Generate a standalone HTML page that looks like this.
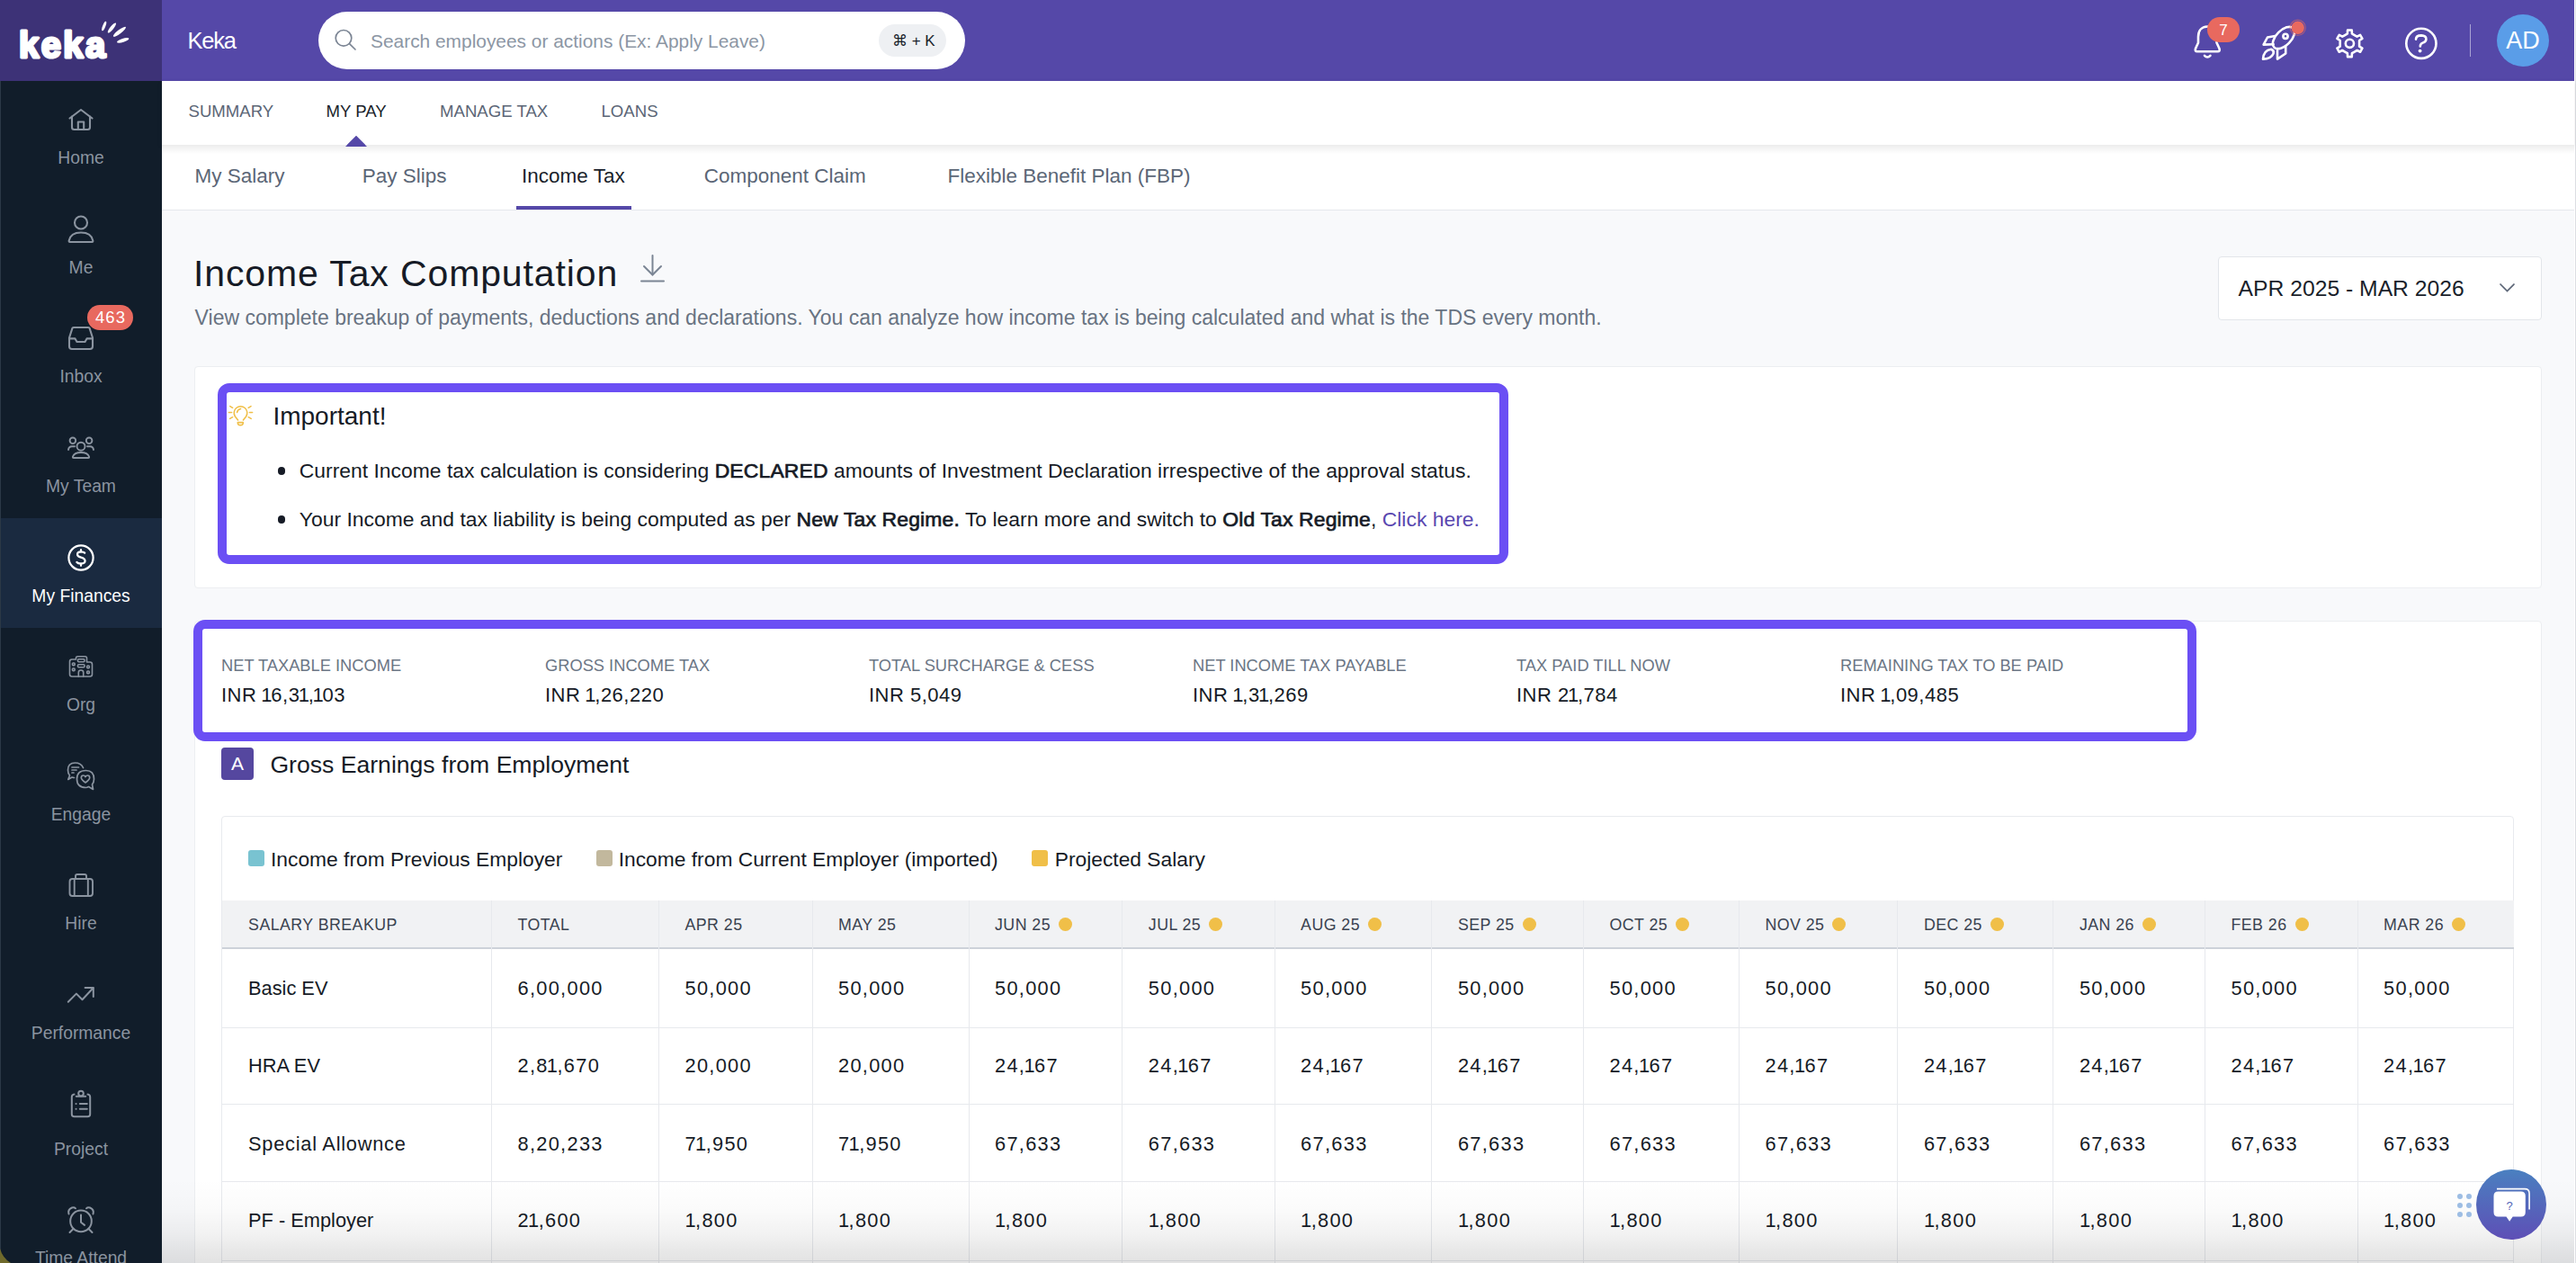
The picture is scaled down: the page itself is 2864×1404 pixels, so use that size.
<!DOCTYPE html>
<html><head><meta charset="utf-8"><style>
html,body{margin:0;padding:0;width:2864px;height:1404px;overflow:hidden;background:#f7f8fa}
body{position:relative;font-family:"Liberation Sans", sans-serif}
.a{position:absolute}
.t{position:absolute;line-height:1;white-space:nowrap;font-family:"Liberation Sans", sans-serif}
.sb{-webkit-text-stroke:0.7px #161b26;letter-spacing:0.17px}
.dot{display:inline-block;width:15px;height:15px;border-radius:50%;background:#f0bf48;margin-left:9px;vertical-align:-1px}
</style></head><body>
<div class="a" style="left:0.0px;top:0.0px;width:2864.0px;height:1404.0px;background:#f8f9fb"></div>
<div class="a" style="left:0.0px;top:0.0px;width:180.0px;height:1404.0px;background:#111d2a"></div>
<div class="a" style="left:0.0px;top:0.0px;width:180.0px;height:90.0px;background:#3d3277"></div>
<svg class="a" style="left:0;top:0" width="180" height="90" viewBox="0 0 180 90"><text x="21" y="64" font-family="Liberation Sans" font-weight="700" font-size="40" letter-spacing="2.4" fill="#fff" stroke="#fff" stroke-width="3" stroke-linejoin="round">keka</text><g fill="#fff"><ellipse cx="115.7" cy="29" rx="5.6" ry="1.6" transform="rotate(-69 115.7 29)"/><ellipse cx="124.4" cy="31" rx="7" ry="1.9" transform="rotate(-51 124.4 31)"/><ellipse cx="132.9" cy="35.3" rx="8.7" ry="2.1" transform="rotate(-37 132.9 35.3)"/><ellipse cx="136.7" cy="44.9" rx="7" ry="2.0" transform="rotate(-18 136.7 44.9)"/></g></svg>
<div class="a" style="left:0.0px;top:575.5px;width:180.0px;height:122.5px;background:#1a2a40"></div>
<div class="t" style="left:0;width:180px;text-align:center;top:166.3px;font-size:19.3px;color:#8b94a0">Home</div>
<div class="t" style="left:0;width:180px;text-align:center;top:287.9px;font-size:19.3px;color:#8b94a0">Me</div>
<div class="t" style="left:0;width:180px;text-align:center;top:408.7px;font-size:19.3px;color:#8b94a0">Inbox</div>
<div class="t" style="left:0;width:180px;text-align:center;top:531.2px;font-size:19.3px;color:#8b94a0">My Team</div>
<div class="t" style="left:0;width:180px;text-align:center;top:653.0px;font-size:19.3px;color:#ffffff">My Finances</div>
<div class="t" style="left:0;width:180px;text-align:center;top:773.9px;font-size:19.3px;color:#8b94a0">Org</div>
<div class="t" style="left:0;width:180px;text-align:center;top:895.7px;font-size:19.3px;color:#8b94a0">Engage</div>
<div class="t" style="left:0;width:180px;text-align:center;top:1016.6px;font-size:19.3px;color:#8b94a0">Hire</div>
<div class="t" style="left:0;width:180px;text-align:center;top:1139.3px;font-size:19.3px;color:#8b94a0">Performance</div>
<div class="t" style="left:0;width:180px;text-align:center;top:1268.2px;font-size:19.3px;color:#8b94a0">Project</div>
<div class="t" style="left:0;width:180px;text-align:center;top:1389.0px;font-size:19.3px;color:#8b94a0">Time Attend</div>
<div class="a" style="left:0.0px;top:90.0px;width:1.2px;height:1314.0px;background:#2b3846"></div>
<svg class="a" style="left:0;top:0" width="180" height="1404" viewBox="0 0 180 1404" fill="none"><g stroke="#8b94a0" stroke-width="2.1" stroke-linecap="round" stroke-linejoin="round"><path d="M77.5 131.5 L90 122 L102.5 131.5"/><path d="M80 129.5 V141.5 Q80 144 82.5 144 H97.5 Q100 144 100 141.5 V129.5"/><path d="M86.8 144 V135.5 H93.2 V144"/></g></svg>
<svg class="a" style="left:0;top:0" width="180" height="1404" viewBox="0 0 180 1404" fill="none"><g stroke="#8b94a0" stroke-width="2.1" stroke-linecap="round" stroke-linejoin="round"><circle cx="90" cy="247.5" r="7"/><path d="M77.5 269 H102.5 Q103.5 269 103.3 267.5 Q101.5 258.5 90 258.5 Q78.5 258.5 76.7 267.5 Q76.5 269 77.5 269 Z"/></g></svg>
<svg class="a" style="left:0;top:0" width="180" height="1404" viewBox="0 0 180 1404" fill="none"><g stroke="#8b94a0" stroke-width="2.1" stroke-linecap="round" stroke-linejoin="round"><path d="M77 375.5 L80.5 364.6 Q81 364 82 364 H98 Q99 364 99.5 364.6 L103 375.5 V385 Q103 388 100 388 H80 Q77 388 77 385 Z"/><path d="M77 376.4 H83.5 L85.5 380 H94.5 L96.5 376.4 H103"/></g></svg>
<div class="a" style="left:97px;top:339px;width:51px;height:28px;border-radius:14px;background:#e8695f"></div>
<div class="t" style="left:97px;width:51px;text-align:center;top:344.3px;font-size:18.5px;letter-spacing:1px;text-indent:1px;color:#fff">463</div>
<svg class="a" style="left:0;top:0" width="180" height="1404" viewBox="0 0 180 1404" fill="none"><g stroke="#8b94a0" stroke-width="1.9" stroke-linecap="round" stroke-linejoin="round"><circle cx="80.9" cy="489.8" r="3.3"/><circle cx="99.1" cy="489.8" r="3.3"/><circle cx="90" cy="496.2" r="4.5"/><path d="M82 509 H98 Q99.5 509 99 507.5 Q97.5 503 90 503 Q82.5 503 81 507.5 Q80.5 509 82 509 Z"/><path d="M76 500 Q76.5 496.3 80 496.3 H83"/><path d="M104 500 Q103.5 496.3 100 496.3 H97"/></g></svg>
<svg class="a" style="left:0;top:0" width="180" height="1404" viewBox="0 0 180 1404" fill="none"><g stroke="#ffffff" stroke-width="2.2" stroke-linecap="round" stroke-linejoin="round"><circle cx="90" cy="620" r="13.6"/><path d="M94.2 614.6 Q93 613.4 90 613.4 Q86 613.4 86 616.2 Q86 618.6 90 619.6 Q94.6 620.8 94.6 623.6 Q94.6 626.6 90 626.6 Q86.6 626.6 85.4 625"/><path d="M90 611.2 V613.4 M90 626.6 V628.8"/></g></svg>
<svg class="a" style="left:0;top:0" width="180" height="1404" viewBox="0 0 180 1404" fill="none"><g stroke="#8b94a0" stroke-width="1.6" stroke-linecap="round" stroke-linejoin="round"><path d="M77.5 745 V735.5 Q77.5 733 80 733 H84.5 V731.5 Q84.5 729.7 86.3 729.7 H94.7 Q96.5 729.7 96.5 731.5 V736 H100 Q102.5 736 102.5 738.5 V749.5 Q102.5 752 100 752 H80 Q77.5 752 77.5 749.5 Z"/><rect x="86.5" y="732.7" width="7.5" height="3" rx="1"/><rect x="86.5" y="738.8" width="7.5" height="3" rx="1"/><rect x="80.5" y="737" width="2.6" height="2.6" rx="0.8"/><rect x="80.5" y="743" width="2.6" height="2.6" rx="0.8"/><rect x="96.7" y="740" width="2.6" height="2.6" rx="0.8"/><rect x="96.7" y="746" width="2.6" height="2.6" rx="0.8"/><path d="M87.3 752 V747.5 Q87.3 745 90 745 Q92.7 745 92.7 747.5 V752"/></g></svg>
<svg class="a" style="left:0;top:0" width="180" height="1404" viewBox="0 0 180 1404" fill="none"><g stroke="#8b94a0" stroke-width="1.7" stroke-linecap="round" stroke-linejoin="round"><path d="M92.5 853.5 Q90 848 83.5 848 Q75.5 848 75.5 856 Q75.5 860 77.5 862 L75.8 866.5 L80 864 Q81.5 864.5 82.5 864.5"/><path d="M80 853 H87.5 M80 856 H85 M80 859 H82"/><path d="M95.5 856.5 Q104.5 856.5 104.5 866 Q104.5 869.5 102.5 872 L103.5 877.5 L98.5 874.5 Q97 875.5 95.5 875.5 Q85.5 875.5 85.5 866 Q85.5 856.5 95.5 856.5 Z"/><path d="M95 870 Q90.3 866.5 90.3 864.5 Q90.3 862 92.6 862 Q94.2 862 95 863.6 Q95.8 862 97.4 862 Q99.7 862 99.7 864.5 Q99.7 866.5 95 870 Z"/></g></svg>
<svg class="a" style="left:0;top:0" width="180" height="1404" viewBox="0 0 180 1404" fill="none"><g stroke="#8b94a0" stroke-width="1.9" stroke-linecap="round" stroke-linejoin="round"><rect x="77.5" y="977" width="25.5" height="19" rx="3"/><path d="M84 977 V973.8 Q84 972 86 972 H94 Q96 972 96 973.8 V977"/><path d="M82.7 977 V996 M97.8 977 V996"/></g></svg>
<svg class="a" style="left:0;top:0" width="180" height="1404" viewBox="0 0 180 1404" fill="none"><g stroke="#8b94a0" stroke-width="2.0" stroke-linecap="round" stroke-linejoin="round"><polyline points="75.8,1113.8 84.9,1104.6 91.5,1111.2 103.6,1098.2"/><polyline points="94.6,1098 103.8,1098 103.8,1108"/></g></svg>
<svg class="a" style="left:0;top:0" width="180" height="1404" viewBox="0 0 180 1404" fill="none"><g stroke="#8b94a0" stroke-width="2.0" stroke-linecap="round" stroke-linejoin="round"><path d="M82.5 1216.5 Q79.8 1216.8 79.8 1219.5 V1238.5 Q79.8 1241.3 82.6 1241.3 H97.4 Q100.2 1241.3 100.2 1238.5 V1219.5 Q100.2 1216.8 97.5 1216.5"/><circle cx="90" cy="1215.6" r="2.8"/><path d="M84.8 1218.8 H95.2"/><path d="M84.5 1227 H84.6 M84.5 1232.7 H84.6"/><path d="M88.8 1227 H96.8 M88.8 1232.7 H96.8"/></g></svg>
<svg class="a" style="left:0;top:0" width="180" height="1404" viewBox="0 0 180 1404" fill="none"><g stroke="#8b94a0" stroke-width="2.0" stroke-linecap="round" stroke-linejoin="round"><circle cx="90" cy="1357.4" r="11.8"/><path d="M90 1350.6 V1358.8 L94 1361.9"/><path d="M76.5 1349.5 Q75 1344.5 80 1342.5 Q82.5 1341.6 84 1343.3"/><path d="M103.5 1349.5 Q105 1344.5 100 1342.5 Q97.5 1341.6 96 1343.3"/><path d="M81.5 1366 L77.5 1370 M98.5 1366 L102.5 1370"/></g></svg>
<div class="a" style="left:180.0px;top:0.0px;width:2682.0px;height:90.0px;background:#5548a8"></div>
<div class="t" style="left:208.5px;top:33.4px;font-size:25.5px;color:#ffffff;font-weight:400;letter-spacing:-1.2px;">Keka</div>
<div class="a" style="left:353.5px;top:13.0px;width:719.0px;height:64.0px;background:#fff;border-radius:32px"></div>
<svg class="a" style="left:372.0px;top:32.0px;" width="25" height="25" viewBox="0 0 25 25" fill="none"><circle cx="10" cy="10.3" r="8.8" stroke="#7b8594" stroke-width="1.7"/><line x1="16.5" y1="16.6" x2="23" y2="23" stroke="#7b8594" stroke-width="1.7" stroke-linecap="round"/></svg>
<div class="t" style="left:412.0px;top:35.6px;font-size:20.9px;color:#8c96a4;font-weight:400;letter-spacing:0px;">Search employees or actions (Ex: Apply Leave)</div>
<div class="a" style="left:977.0px;top:27.0px;width:75.0px;height:36.0px;background:#eef0f3;border-radius:18px"></div>
<div class="t" style="left:992.0px;top:36.9px;font-size:17px;color:#1a1f2b;font-weight:400;letter-spacing:0px;">&#8984; + K</div>
<div class="a" style="left:2746.0px;top:27.0px;width:1.0px;height:36.0px;background:rgba(255,255,255,0.5)"></div>
<svg class="a" style="left:2420px;top:0" width="444" height="90" viewBox="2420 0 444 90" fill="none"><g stroke="#fff" stroke-width="2.6" stroke-linecap="round" stroke-linejoin="round"><path d="M2454.2 29.5 C2447.5 29.5 2444 34.5 2444 41 V47.5 L2441 54 Q2440 57.3 2443 57.3 H2465.5 Q2468.5 57.3 2467.5 54 L2464.5 47.5 V41 C2464.5 34.5 2461 29.5 2454.2 29.5 Z"/><path d="M2451 61.8 Q2454.2 65.2 2457.4 61.8"/><ellipse cx="2539" cy="42" rx="15" ry="8.3" transform="rotate(-45 2539 42)"/><circle cx="2541" cy="40.3" r="2.6"/><path d="M2529.5 40 L2521 41.5 L2516.6 49.6 L2527.6 49.3"/><path d="M2541.2 51.6 V59.5 L2532 65.6 L2532 56"/><path d="M2516 65.8 Q2516.5 56 2525 54.8 Q2528.5 56 2527.6 59.5 Q2525 65.5 2516 65.8 Z"/><path d="M2608.35 38.29 L2609.88 37.39 L2610.05 33.48 L2614.75 33.48 L2614.92 37.39 L2616.45 38.29 L2619.05 39.79 L2620.59 40.66 L2624.06 38.86 L2626.40 42.92 L2623.11 45.03 L2623.09 46.80 L2623.09 49.80 L2623.11 51.57 L2626.40 53.68 L2624.06 57.74 L2620.59 55.94 L2619.05 56.81 L2616.45 58.31 L2614.92 59.21 L2614.75 63.12 L2610.05 63.12 L2609.88 59.21 L2608.35 58.31 L2605.75 56.81 L2604.21 55.94 L2600.74 57.74 L2598.40 53.68 L2601.69 51.57 L2601.71 49.80 L2601.71 46.80 L2601.69 45.03 L2598.40 42.92 L2600.74 38.86 L2604.21 40.66 L2605.75 39.79 Z"/><circle cx="2612.4" cy="48.3" r="4.6"/><circle cx="2691.9" cy="48.3" r="16.6"/><path d="M2686 43.6 Q2686.2 39.4 2692 39.4 Q2697.4 39.6 2697.4 43.4 Q2697.4 46.2 2693.6 47.6 Q2690.8 48.6 2690.8 51.4"/></g><circle cx="2690.6" cy="56.6" r="1.9" fill="#fff"/><circle cx="2554.7" cy="30.8" r="8.6" fill="none" stroke="rgba(232,105,95,0.55)" stroke-width="1.2"/><circle cx="2554.7" cy="30.8" r="7.2" fill="#e8695f"/></svg>
<div class="a" style="left:2454.0px;top:19.0px;width:36.0px;height:28.0px;background:#e8695f;border-radius:14px"></div>
<div class="t" style="left:2454px;width:36px;text-align:center;top:24.5px;font-size:17px;color:#fff">7</div>
<div class="a" style="left:2776.0px;top:16.0px;width:58.0px;height:58.0px;background:#5a9de8;border-radius:50%"></div>
<div class="t" style="left:2776px;width:58px;text-align:center;top:32.2px;font-size:27px;color:#fff">AD</div>
<div class="a" style="left:2862.0px;top:0.0px;width:1.0px;height:1404.0px;background:#ffffff"></div>
<div class="a" style="left:2863.0px;top:0.0px;width:1.0px;height:1404.0px;background:#dcdee2"></div>
<div class="a" style="left:180.0px;top:90.0px;width:2682.0px;height:71.0px;background:#fff;box-shadow:0 2px 6px rgba(0,0,0,0.08)"></div>
<div class="t" style="left:209.5px;top:114.9px;font-size:18.6px;color:#5b6676;font-weight:400;letter-spacing:0px;">SUMMARY</div>
<div class="t" style="left:362.6px;top:114.9px;font-size:18.6px;color:#1a1f2b;font-weight:400;letter-spacing:0px;">MY PAY</div>
<div class="t" style="left:489.0px;top:114.9px;font-size:18.6px;color:#5b6676;font-weight:400;letter-spacing:0px;">MANAGE TAX</div>
<div class="t" style="left:668.5px;top:114.9px;font-size:18.6px;color:#5b6676;font-weight:400;letter-spacing:0px;">LOANS</div>
<div class="a" style="left:384px;top:151px;width:0;height:0;border-left:12px solid transparent;border-right:12px solid transparent;border-bottom:12px solid #5548a8"></div>
<div class="a" style="left:180.0px;top:161.0px;width:2682.0px;height:72.0px;background:#fff"></div>
<div class="a" style="left:180.0px;top:233.0px;width:2682.0px;height:1.0px;background:#e5e8ec"></div>
<div class="t" style="left:216.6px;top:185.4px;font-size:22.5px;color:#5b6676;font-weight:400;letter-spacing:0px;">My Salary</div>
<div class="t" style="left:402.8px;top:185.4px;font-size:22.5px;color:#5b6676;font-weight:400;letter-spacing:0px;">Pay Slips</div>
<div class="t" style="left:580.0px;top:185.4px;font-size:22.5px;color:#1a1f2b;font-weight:400;letter-spacing:0px;">Income Tax</div>
<div class="t" style="left:782.7px;top:185.4px;font-size:22.5px;color:#5b6676;font-weight:400;letter-spacing:0px;">Component Claim</div>
<div class="t" style="left:1053.5px;top:185.4px;font-size:22.5px;color:#5b6676;font-weight:400;letter-spacing:0px;">Flexible Benefit Plan (FBP)</div>
<div class="a" style="left:574.0px;top:229.0px;width:128.0px;height:4.0px;background:#5548a8"></div>
<div class="a" style="left:180.0px;top:161.0px;width:2682.0px;height:10.0px;background:linear-gradient(to bottom, rgba(0,0,0,0.075), rgba(0,0,0,0))"></div>
<div class="a" style="left:384px;top:151px;width:0;height:0;border-left:12px solid transparent;border-right:12px solid transparent;border-bottom:12px solid #5548a8"></div>
<div class="t" style="left:215.0px;top:283.5px;font-size:41px;color:#161b26;font-weight:400;letter-spacing:0.88px;">Income Tax Computation</div>
<svg class="a" style="left:712.0px;top:283.0px;" width="27" height="31" viewBox="0 0 27 31" fill="none"><g stroke="#7b8594" stroke-width="2" stroke-linecap="round"><line x1="13.5" y1="1" x2="13.5" y2="22"/><polyline points="4,13 13.5,22.5 23,13"/><line x1="1" y1="29.5" x2="26" y2="29.5"/></g></svg>
<div class="t" style="left:216.6px;top:342.2px;font-size:23px;color:#687382;font-weight:400;letter-spacing:0px;">View complete breakup of payments, deductions and declarations. You can analyze how income tax is being calculated and what is the TDS every month.</div>
<div class="a" style="left:2466.0px;top:284.5px;width:360.0px;height:71.5px;background:#fff;border:1px solid #e3e6ea;border-radius:4px;box-sizing:border-box"></div>
<div class="t" style="left:2488.6px;top:309.1px;font-size:24.7px;color:#1a1f2b;font-weight:400;letter-spacing:0px;">APR 2025 - MAR 2026</div>
<svg class="a" style="left:2778.0px;top:314.0px;" width="19" height="12" viewBox="0 0 19 12" fill="none"><polyline points="1.5,1.5 9.5,9.5 17.5,1.5" stroke="#5b6576" stroke-width="1.7" fill="none"/></svg>
<div class="a" style="left:216.0px;top:407.0px;width:2609.5px;height:247.0px;background:#fff;border:1px solid #eceef1;border-radius:4px;box-sizing:border-box"></div>
<div class="a" style="left:242.0px;top:425.5px;width:1435.0px;height:201.5px;border:10px solid #6b4ff4;border-radius:13px;box-sizing:border-box"></div>
<svg class="a" style="left:250px;top:446px" width="36" height="30" viewBox="250 446 36 30" fill="none"><g stroke="#f0bf48" stroke-width="1.55" stroke-linecap="round" stroke-linejoin="round"><path d="M264.6 467 L261.4 463 A7.3 7.3 0 1 1 273.6 463 L270.4 467"/><path d="M263.6 458.4 Q264.3 455 267.6 454.4"/><path d="M264.3 469.6 H270.3 Q270.5 472.6 267.3 472.6 Q264.1 472.6 264.3 469.6 Z"/><path d="M255.8 451.6 L258.6 453.3 M254.4 458.5 H257.6 M255.6 465.4 L258.6 463.7 M279 451.6 L276.2 453.3 M280.6 458.5 H277.4 M279.2 465.4 L276.2 463.7"/></g></svg>
<div class="t" style="left:303.4px;top:449.3px;font-size:28px;color:#161b26;font-weight:400;letter-spacing:0px;">Important!</div>
<div class="a" style="left:308.8px;top:519.0px;width:8.6px;height:8.6px;background:#161b26;border-radius:50%"></div>
<div class="a" style="left:308.8px;top:573.0px;width:8.6px;height:8.6px;background:#161b26;border-radius:50%"></div>
<div class="t" style="left:332.8px;top:512.3px;font-size:22.9px;color:#161b26;font-weight:400;letter-spacing:0px;">Current Income tax calculation is considering <span class="sb">DECLARED</span> amounts of Investment Declaration irrespective of the approval status.</div>
<div class="t" style="left:332.8px;top:566.4px;font-size:22.9px;color:#161b26;font-weight:400;letter-spacing:0px;">Your Income and tax liability is being computed as per <span class="sb">New Tax Regime.</span> To learn more and switch to <span class="sb">Old Tax Regime</span>, <span style="color:#5a48b0">Click here.</span></div>
<div class="a" style="left:216.0px;top:690.0px;width:2609.5px;height:800.0px;background:#fff;border:1px solid #eceef1;border-radius:4px;box-sizing:border-box"></div>
<div class="a" style="left:215.0px;top:688.5px;width:2226.5px;height:135.5px;border:10px solid #6b4ff4;border-radius:13px;box-sizing:border-box"></div>
<div class="t" style="left:246.0px;top:730.7px;font-size:18.3px;color:#6b7685;font-weight:400;letter-spacing:0px;">NET TAXABLE INCOME</div>
<div class="t" style="left:246.0px;top:762.2px;font-size:22px;color:#161b26;font-weight:400;letter-spacing:0.5px;">INR<span style="letter-spacing:-1.25px"> </span><span style="letter-spacing:-1.25px">1</span>6,<span style="letter-spacing:-1.25px">3</span><span style="letter-spacing:-1.25px">1</span><span style="letter-spacing:-1.25px">,</span><span style="letter-spacing:-1.25px">1</span>03</div>
<div class="t" style="left:606.0px;top:730.7px;font-size:18.3px;color:#6b7685;font-weight:400;letter-spacing:0px;">GROSS INCOME TAX</div>
<div class="t" style="left:606.0px;top:762.2px;font-size:22px;color:#161b26;font-weight:400;letter-spacing:0.5px;">INR<span style="letter-spacing:-1.25px"> </span><span style="letter-spacing:-1.25px">1</span>,26,220</div>
<div class="t" style="left:966.0px;top:730.7px;font-size:18.3px;color:#6b7685;font-weight:400;letter-spacing:0px;">TOTAL SURCHARGE &amp; CESS</div>
<div class="t" style="left:966.0px;top:762.2px;font-size:22px;color:#161b26;font-weight:400;letter-spacing:0.5px;">INR 5,049</div>
<div class="t" style="left:1326.0px;top:730.7px;font-size:18.3px;color:#6b7685;font-weight:400;letter-spacing:0px;">NET INCOME TAX PAYABLE</div>
<div class="t" style="left:1326.0px;top:762.2px;font-size:22px;color:#161b26;font-weight:400;letter-spacing:0.5px;">INR<span style="letter-spacing:-1.25px"> </span><span style="letter-spacing:-1.25px">1</span>,<span style="letter-spacing:-1.25px">3</span><span style="letter-spacing:-1.25px">1</span>,269</div>
<div class="t" style="left:1686.0px;top:730.7px;font-size:18.3px;color:#6b7685;font-weight:400;letter-spacing:0px;">TAX PAID TILL NOW</div>
<div class="t" style="left:1686.0px;top:762.2px;font-size:22px;color:#161b26;font-weight:400;letter-spacing:0.5px;">INR <span style="letter-spacing:-1.25px">2</span><span style="letter-spacing:-1.25px">1</span>,784</div>
<div class="t" style="left:2046.0px;top:730.7px;font-size:18.3px;color:#6b7685;font-weight:400;letter-spacing:0px;">REMAINING TAX TO BE PAID</div>
<div class="t" style="left:2046.0px;top:762.2px;font-size:22px;color:#161b26;font-weight:400;letter-spacing:0.5px;">INR<span style="letter-spacing:-1.25px"> </span><span style="letter-spacing:-1.25px">1</span>,09,485</div>
<div class="a" style="left:246.0px;top:830.7px;width:36.0px;height:36.3px;background:#55479f;border-radius:4px"></div>
<div class="t" style="left:246px;width:36px;text-align:center;top:838px;font-size:21px;color:#fff">A</div>
<div class="t" style="left:300.4px;top:836.9px;font-size:26.6px;color:#161b26;font-weight:400;letter-spacing:0px;">Gross Earnings from Employment</div>
<div class="a" style="left:246.0px;top:907.0px;width:2549.0px;height:600.0px;background:#fff;border:1px solid #e8eaee;border-radius:4px;box-sizing:border-box"></div>
<div class="a" style="left:276.0px;top:945.0px;width:18.0px;height:18.0px;background:#79c3d1;border-radius:3px"></div>
<div class="t" style="left:301.0px;top:943.7px;font-size:22.8px;color:#161b26;font-weight:400;letter-spacing:0px;">Income from Previous Employer</div>
<div class="a" style="left:662.5px;top:945.0px;width:18.0px;height:18.0px;background:#c2b89d;border-radius:3px"></div>
<div class="t" style="left:687.7px;top:943.7px;font-size:22.8px;color:#161b26;font-weight:400;letter-spacing:0px;">Income from Current Employer (imported)</div>
<div class="a" style="left:1147.0px;top:945.0px;width:18.0px;height:18.0px;background:#f0bf48;border-radius:3px"></div>
<div class="t" style="left:1172.7px;top:943.7px;font-size:22.8px;color:#161b26;font-weight:400;letter-spacing:0px;">Projected Salary</div>
<div class="a" style="left:246.6px;top:1000.6px;width:2548.4px;height:52.0px;background:#f1f2f4"></div>
<div class="a" style="left:246.6px;top:1052.5px;width:2548.4px;height:2.0px;background:#cdd2d9"></div>
<div class="a" style="left:246.6px;top:1141.7px;width:2548.4px;height:1.0px;background:#e7e9ed"></div>
<div class="a" style="left:246.6px;top:1227.3px;width:2548.4px;height:1.0px;background:#e7e9ed"></div>
<div class="a" style="left:246.6px;top:1313.3px;width:2548.4px;height:1.0px;background:#e7e9ed"></div>
<div class="a" style="left:246.6px;top:1400.5px;width:2548.4px;height:1.0px;background:#e7e9ed"></div>
<div class="a" style="left:546.0px;top:1000.6px;width:1.0px;height:420.0px;background:#e7e9ed"></div>
<div class="a" style="left:732.0px;top:1000.6px;width:1.0px;height:420.0px;background:#e7e9ed"></div>
<div class="a" style="left:902.5px;top:1000.6px;width:1.0px;height:420.0px;background:#e7e9ed"></div>
<div class="a" style="left:1076.5px;top:1000.6px;width:1.0px;height:420.0px;background:#e7e9ed"></div>
<div class="a" style="left:1247.3px;top:1000.6px;width:1.0px;height:420.0px;background:#e7e9ed"></div>
<div class="a" style="left:1416.6px;top:1000.6px;width:1.0px;height:420.0px;background:#e7e9ed"></div>
<div class="a" style="left:1591.4px;top:1000.6px;width:1.0px;height:420.0px;background:#e7e9ed"></div>
<div class="a" style="left:1760.0px;top:1000.6px;width:1.0px;height:420.0px;background:#e7e9ed"></div>
<div class="a" style="left:1933.0px;top:1000.6px;width:1.0px;height:420.0px;background:#e7e9ed"></div>
<div class="a" style="left:2109.4px;top:1000.6px;width:1.0px;height:420.0px;background:#e7e9ed"></div>
<div class="a" style="left:2282.4px;top:1000.6px;width:1.0px;height:420.0px;background:#e7e9ed"></div>
<div class="a" style="left:2451.0px;top:1000.6px;width:1.0px;height:420.0px;background:#e7e9ed"></div>
<div class="a" style="left:2620.6px;top:1000.6px;width:1.0px;height:420.0px;background:#e7e9ed"></div>
<div class="t" style="left:276.1px;top:1019.6px;font-size:17.8px;color:#3a4250;font-weight:400;letter-spacing:0.45px;">SALARY BREAKUP</div>
<div class="t" style="left:575.5px;top:1019.6px;font-size:17.8px;color:#3a4250;font-weight:400;letter-spacing:0.45px;">TOTAL</div>
<div class="t" style="left:761.5px;top:1019.6px;font-size:17.8px;color:#3a4250;font-weight:400;letter-spacing:0.45px;">APR 25</div>
<div class="t" style="left:932.0px;top:1019.6px;font-size:17.8px;color:#3a4250;font-weight:400;letter-spacing:0.45px;">MAY 25</div>
<div class="t" style="left:1106.0px;top:1019.6px;font-size:17.8px;color:#3a4250;font-weight:400;letter-spacing:0.45px;">JUN 25<span class="dot"></span></div>
<div class="t" style="left:1276.8px;top:1019.6px;font-size:17.8px;color:#3a4250;font-weight:400;letter-spacing:0.45px;">JUL 25<span class="dot"></span></div>
<div class="t" style="left:1446.1px;top:1019.6px;font-size:17.8px;color:#3a4250;font-weight:400;letter-spacing:0.45px;">AUG 25<span class="dot"></span></div>
<div class="t" style="left:1620.9px;top:1019.6px;font-size:17.8px;color:#3a4250;font-weight:400;letter-spacing:0.45px;">SEP 25<span class="dot"></span></div>
<div class="t" style="left:1789.5px;top:1019.6px;font-size:17.8px;color:#3a4250;font-weight:400;letter-spacing:0.45px;">OCT 25<span class="dot"></span></div>
<div class="t" style="left:1962.5px;top:1019.6px;font-size:17.8px;color:#3a4250;font-weight:400;letter-spacing:0.45px;">NOV 25<span class="dot"></span></div>
<div class="t" style="left:2138.9px;top:1019.6px;font-size:17.8px;color:#3a4250;font-weight:400;letter-spacing:0.45px;">DEC 25<span class="dot"></span></div>
<div class="t" style="left:2311.9px;top:1019.6px;font-size:17.8px;color:#3a4250;font-weight:400;letter-spacing:0.45px;">JAN 26<span class="dot"></span></div>
<div class="t" style="left:2480.5px;top:1019.6px;font-size:17.8px;color:#3a4250;font-weight:400;letter-spacing:0.45px;">FEB 26<span class="dot"></span></div>
<div class="t" style="left:2650.1px;top:1019.6px;font-size:17.8px;color:#3a4250;font-weight:400;letter-spacing:0.45px;">MAR 26<span class="dot"></span></div>
<div class="t" style="left:276.0px;top:1087.8px;font-size:21.8px;color:#161b26;font-weight:400;letter-spacing:0px;">Basic EV</div>
<div class="t" style="left:575.5px;top:1087.8px;font-size:21.8px;color:#161b26;font-weight:400;letter-spacing:1.3px;">6,00,000</div>
<div class="t" style="left:761.5px;top:1087.8px;font-size:21.8px;color:#161b26;font-weight:400;letter-spacing:1.3px;">50,000</div>
<div class="t" style="left:932.0px;top:1087.8px;font-size:21.8px;color:#161b26;font-weight:400;letter-spacing:1.3px;">50,000</div>
<div class="t" style="left:1106.0px;top:1087.8px;font-size:21.8px;color:#161b26;font-weight:400;letter-spacing:1.3px;">50,000</div>
<div class="t" style="left:1276.8px;top:1087.8px;font-size:21.8px;color:#161b26;font-weight:400;letter-spacing:1.3px;">50,000</div>
<div class="t" style="left:1446.1px;top:1087.8px;font-size:21.8px;color:#161b26;font-weight:400;letter-spacing:1.3px;">50,000</div>
<div class="t" style="left:1620.9px;top:1087.8px;font-size:21.8px;color:#161b26;font-weight:400;letter-spacing:1.3px;">50,000</div>
<div class="t" style="left:1789.5px;top:1087.8px;font-size:21.8px;color:#161b26;font-weight:400;letter-spacing:1.3px;">50,000</div>
<div class="t" style="left:1962.5px;top:1087.8px;font-size:21.8px;color:#161b26;font-weight:400;letter-spacing:1.3px;">50,000</div>
<div class="t" style="left:2138.9px;top:1087.8px;font-size:21.8px;color:#161b26;font-weight:400;letter-spacing:1.3px;">50,000</div>
<div class="t" style="left:2311.9px;top:1087.8px;font-size:21.8px;color:#161b26;font-weight:400;letter-spacing:1.3px;">50,000</div>
<div class="t" style="left:2480.5px;top:1087.8px;font-size:21.8px;color:#161b26;font-weight:400;letter-spacing:1.3px;">50,000</div>
<div class="t" style="left:2650.1px;top:1087.8px;font-size:21.8px;color:#161b26;font-weight:400;letter-spacing:1.3px;">50,000</div>
<div class="t" style="left:276.0px;top:1173.5px;font-size:21.8px;color:#161b26;font-weight:400;letter-spacing:0px;">HRA EV</div>
<div class="t" style="left:575.5px;top:1173.5px;font-size:21.8px;color:#161b26;font-weight:400;letter-spacing:1.3px;">2,<span style="letter-spacing:-0.55px">8</span><span style="letter-spacing:-0.55px">1</span>,670</div>
<div class="t" style="left:761.5px;top:1173.5px;font-size:21.8px;color:#161b26;font-weight:400;letter-spacing:1.3px;">20,000</div>
<div class="t" style="left:932.0px;top:1173.5px;font-size:21.8px;color:#161b26;font-weight:400;letter-spacing:1.3px;">20,000</div>
<div class="t" style="left:1106.0px;top:1173.5px;font-size:21.8px;color:#161b26;font-weight:400;letter-spacing:1.3px;">24<span style="letter-spacing:-0.55px">,</span><span style="letter-spacing:-0.55px">1</span>67</div>
<div class="t" style="left:1276.8px;top:1173.5px;font-size:21.8px;color:#161b26;font-weight:400;letter-spacing:1.3px;">24<span style="letter-spacing:-0.55px">,</span><span style="letter-spacing:-0.55px">1</span>67</div>
<div class="t" style="left:1446.1px;top:1173.5px;font-size:21.8px;color:#161b26;font-weight:400;letter-spacing:1.3px;">24<span style="letter-spacing:-0.55px">,</span><span style="letter-spacing:-0.55px">1</span>67</div>
<div class="t" style="left:1620.9px;top:1173.5px;font-size:21.8px;color:#161b26;font-weight:400;letter-spacing:1.3px;">24<span style="letter-spacing:-0.55px">,</span><span style="letter-spacing:-0.55px">1</span>67</div>
<div class="t" style="left:1789.5px;top:1173.5px;font-size:21.8px;color:#161b26;font-weight:400;letter-spacing:1.3px;">24<span style="letter-spacing:-0.55px">,</span><span style="letter-spacing:-0.55px">1</span>67</div>
<div class="t" style="left:1962.5px;top:1173.5px;font-size:21.8px;color:#161b26;font-weight:400;letter-spacing:1.3px;">24<span style="letter-spacing:-0.55px">,</span><span style="letter-spacing:-0.55px">1</span>67</div>
<div class="t" style="left:2138.9px;top:1173.5px;font-size:21.8px;color:#161b26;font-weight:400;letter-spacing:1.3px;">24<span style="letter-spacing:-0.55px">,</span><span style="letter-spacing:-0.55px">1</span>67</div>
<div class="t" style="left:2311.9px;top:1173.5px;font-size:21.8px;color:#161b26;font-weight:400;letter-spacing:1.3px;">24<span style="letter-spacing:-0.55px">,</span><span style="letter-spacing:-0.55px">1</span>67</div>
<div class="t" style="left:2480.5px;top:1173.5px;font-size:21.8px;color:#161b26;font-weight:400;letter-spacing:1.3px;">24<span style="letter-spacing:-0.55px">,</span><span style="letter-spacing:-0.55px">1</span>67</div>
<div class="t" style="left:2650.1px;top:1173.5px;font-size:21.8px;color:#161b26;font-weight:400;letter-spacing:1.3px;">24<span style="letter-spacing:-0.55px">,</span><span style="letter-spacing:-0.55px">1</span>67</div>
<div class="t" style="left:276.0px;top:1260.5px;font-size:21.8px;color:#161b26;font-weight:400;letter-spacing:0.75px;">Special Allownce</div>
<div class="t" style="left:575.5px;top:1260.5px;font-size:21.8px;color:#161b26;font-weight:400;letter-spacing:1.3px;">8,20,233</div>
<div class="t" style="left:761.5px;top:1260.5px;font-size:21.8px;color:#161b26;font-weight:400;letter-spacing:1.3px;"><span style="letter-spacing:-0.55px">7</span><span style="letter-spacing:-0.55px">1</span>,950</div>
<div class="t" style="left:932.0px;top:1260.5px;font-size:21.8px;color:#161b26;font-weight:400;letter-spacing:1.3px;"><span style="letter-spacing:-0.55px">7</span><span style="letter-spacing:-0.55px">1</span>,950</div>
<div class="t" style="left:1106.0px;top:1260.5px;font-size:21.8px;color:#161b26;font-weight:400;letter-spacing:1.3px;">67,633</div>
<div class="t" style="left:1276.8px;top:1260.5px;font-size:21.8px;color:#161b26;font-weight:400;letter-spacing:1.3px;">67,633</div>
<div class="t" style="left:1446.1px;top:1260.5px;font-size:21.8px;color:#161b26;font-weight:400;letter-spacing:1.3px;">67,633</div>
<div class="t" style="left:1620.9px;top:1260.5px;font-size:21.8px;color:#161b26;font-weight:400;letter-spacing:1.3px;">67,633</div>
<div class="t" style="left:1789.5px;top:1260.5px;font-size:21.8px;color:#161b26;font-weight:400;letter-spacing:1.3px;">67,633</div>
<div class="t" style="left:1962.5px;top:1260.5px;font-size:21.8px;color:#161b26;font-weight:400;letter-spacing:1.3px;">67,633</div>
<div class="t" style="left:2138.9px;top:1260.5px;font-size:21.8px;color:#161b26;font-weight:400;letter-spacing:1.3px;">67,633</div>
<div class="t" style="left:2311.9px;top:1260.5px;font-size:21.8px;color:#161b26;font-weight:400;letter-spacing:1.3px;">67,633</div>
<div class="t" style="left:2480.5px;top:1260.5px;font-size:21.8px;color:#161b26;font-weight:400;letter-spacing:1.3px;">67,633</div>
<div class="t" style="left:2650.1px;top:1260.5px;font-size:21.8px;color:#161b26;font-weight:400;letter-spacing:1.3px;">67,633</div>
<div class="t" style="left:276.0px;top:1346.3px;font-size:21.8px;color:#161b26;font-weight:400;letter-spacing:0px;">PF - Employer</div>
<div class="t" style="left:575.5px;top:1346.3px;font-size:21.8px;color:#161b26;font-weight:400;letter-spacing:1.3px;"><span style="letter-spacing:-0.55px">2</span><span style="letter-spacing:-0.55px">1</span>,600</div>
<div class="t" style="left:761.5px;top:1346.3px;font-size:21.8px;color:#161b26;font-weight:400;letter-spacing:1.3px;"><span style="letter-spacing:-0.55px">1</span>,800</div>
<div class="t" style="left:932.0px;top:1346.3px;font-size:21.8px;color:#161b26;font-weight:400;letter-spacing:1.3px;"><span style="letter-spacing:-0.55px">1</span>,800</div>
<div class="t" style="left:1106.0px;top:1346.3px;font-size:21.8px;color:#161b26;font-weight:400;letter-spacing:1.3px;"><span style="letter-spacing:-0.55px">1</span>,800</div>
<div class="t" style="left:1276.8px;top:1346.3px;font-size:21.8px;color:#161b26;font-weight:400;letter-spacing:1.3px;"><span style="letter-spacing:-0.55px">1</span>,800</div>
<div class="t" style="left:1446.1px;top:1346.3px;font-size:21.8px;color:#161b26;font-weight:400;letter-spacing:1.3px;"><span style="letter-spacing:-0.55px">1</span>,800</div>
<div class="t" style="left:1620.9px;top:1346.3px;font-size:21.8px;color:#161b26;font-weight:400;letter-spacing:1.3px;"><span style="letter-spacing:-0.55px">1</span>,800</div>
<div class="t" style="left:1789.5px;top:1346.3px;font-size:21.8px;color:#161b26;font-weight:400;letter-spacing:1.3px;"><span style="letter-spacing:-0.55px">1</span>,800</div>
<div class="t" style="left:1962.5px;top:1346.3px;font-size:21.8px;color:#161b26;font-weight:400;letter-spacing:1.3px;"><span style="letter-spacing:-0.55px">1</span>,800</div>
<div class="t" style="left:2138.9px;top:1346.3px;font-size:21.8px;color:#161b26;font-weight:400;letter-spacing:1.3px;"><span style="letter-spacing:-0.55px">1</span>,800</div>
<div class="t" style="left:2311.9px;top:1346.3px;font-size:21.8px;color:#161b26;font-weight:400;letter-spacing:1.3px;"><span style="letter-spacing:-0.55px">1</span>,800</div>
<div class="t" style="left:2480.5px;top:1346.3px;font-size:21.8px;color:#161b26;font-weight:400;letter-spacing:1.3px;"><span style="letter-spacing:-0.55px">1</span>,800</div>
<div class="t" style="left:2650.1px;top:1346.3px;font-size:21.8px;color:#161b26;font-weight:400;letter-spacing:1.3px;"><span style="letter-spacing:-0.55px">1</span>,800</div>
<svg class="a" style="left:0;top:1370px" width="34" height="34" viewBox="0 1370 34 34"><path d="M0 1370 V1404 H12 A27 27 0 0 1 0 1388 Z" fill="#6f6a2c"/></svg>
<div class="a" style="left:180.0px;top:1310.0px;width:2682.0px;height:94.0px;background:linear-gradient(to bottom, rgba(0,0,0,0) 0%, rgba(0,0,0,0.015) 35%, rgba(0,0,0,0.05) 65%, rgba(0,0,0,0.09) 85%, rgba(0,0,0,0.115) 100%)"></div>
<div class="a" style="left:2752.5px;top:1300.0px;width:78.0px;height:78.0px;background:linear-gradient(to bottom,#4a80c0,#5e4fb6);border-radius:50%"></div>
<svg class="a" style="left:2752.5px;top:1300px" width="78" height="78" viewBox="2752.5 1300 78 78" fill="none"><path d="M2775.5 1321.6 H2806.5 Q2811.6 1321.6 2811.6 1326.7 V1344.5" stroke="#fff" stroke-width="1.6" fill="none"/><path d="M2777 1324.4 H2802.3 Q2807.3 1324.4 2807.3 1329.4 V1347.4 Q2807.3 1352.4 2802.3 1352.4 H2793.2 L2789.6 1357.8 L2786 1352.4 H2777 Q2772 1352.4 2772 1347.4 V1329.4 Q2772 1324.4 2777 1324.4 Z" fill="#fff"/><text x="2789.5" y="1344.6" font-family="Liberation Sans" font-size="13" text-anchor="middle" fill="#5366b8">?</text></svg>
<div class="a" style="left:2731.5px;top:1326.5px;width:6.5px;height:6.5px;background:#9dbde4;border-radius:50%"></div>
<div class="a" style="left:2731.5px;top:1336.5px;width:6.5px;height:6.5px;background:#9dbde4;border-radius:50%"></div>
<div class="a" style="left:2731.5px;top:1346.5px;width:6.5px;height:6.5px;background:#9dbde4;border-radius:50%"></div>
<div class="a" style="left:2741.5px;top:1326.5px;width:6.5px;height:6.5px;background:#9dbde4;border-radius:50%"></div>
<div class="a" style="left:2741.5px;top:1336.5px;width:6.5px;height:6.5px;background:#9dbde4;border-radius:50%"></div>
<div class="a" style="left:2741.5px;top:1346.5px;width:6.5px;height:6.5px;background:#9dbde4;border-radius:50%"></div>
</body></html>
